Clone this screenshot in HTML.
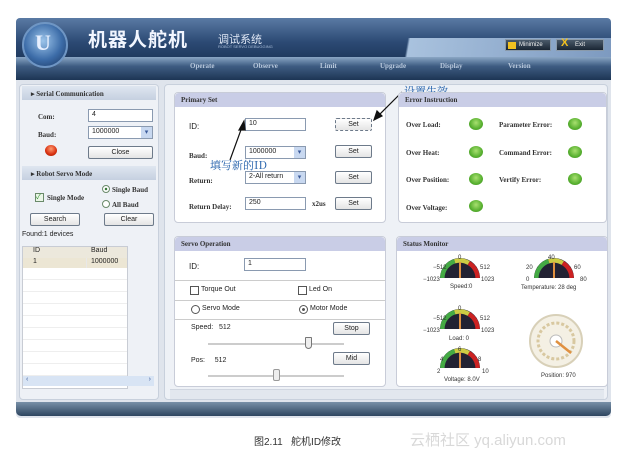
<!DOCTYPE html>
<html><head><meta charset="utf-8"><style>
*{margin:0;padding:0;box-sizing:border-box}
body{width:630px;height:457px;background:#fff;position:relative;overflow:hidden;font-family:"Liberation Sans","Noto Sans CJK SC",sans-serif;font-size:8px;color:#222}
.a{position:absolute}
.ser{font-family:"Liberation Serif","Noto Serif CJK SC",serif;font-weight:bold;font-size:7px;color:#333}
.box{position:absolute;background:#fff;border:1px solid #c8ccd8;border-radius:4px}
.hd{position:absolute;left:0;right:0;top:0;height:14px;background:#c9cde6;border-radius:4px 4px 0 0;padding:3px 6px}
.in{position:absolute;background:#fff;border:1px solid #8a9ab0;height:13px;font-size:7px;padding:1px 3px}
.btn{position:absolute;background:linear-gradient(#fff,#e4e4e4);border:1px solid #6d7a8a;border-radius:2px;height:13px;font-size:7px;text-align:center;line-height:11px}
.led{position:absolute;width:14px;height:12px;border-radius:50%;background:radial-gradient(circle at 50% 40%,#a8e070,#58b030 60%,#3b8a20)}
.dd{position:absolute;right:0;top:0;width:11px;height:11px;background:#c8d8f0;color:#3a5a9a;font-size:7px;text-align:center;line-height:11px}
</style></head><body>
<!-- window -->
<div class="a" style="left:16px;top:18px;width:595px;height:400px;background:#dfe4ec;border-radius:4px"></div>
<div class="a" style="left:16px;top:18px;width:595px;height:40px;background:linear-gradient(#5a7aa4,#2c4a74 60%,#1f3a5e);border-radius:4px 4px 0 0"></div>
<div class="a" style="left:390px;top:38px;width:221px;height:20px;background:linear-gradient(100deg,transparent 0,transparent 8%,#a9c2de 9%,#7d9ac0 100%)"></div>
<div class="a" style="left:16px;top:57px;width:595px;height:23px;background:linear-gradient(#8aa6c4,#3e5c82 40%,#1d3554)"></div>
<div class="a" style="left:22px;top:22px;width:46px;height:46px;border-radius:50%;background:radial-gradient(circle at 45% 40%,#9cc4ea,#3c6ca8 55%,#1a355e);border:2px solid #6f96c4"></div>
<div class="a" style="left:35px;top:30px;color:#e8f0ff;font-size:22px;font-weight:bold;font-family:'Liberation Serif',serif">U</div>
<div class="a" style="left:88px;top:25px;color:#f2f6ff;font-size:19px;font-weight:bold;letter-spacing:1px">机器人舵机</div>
<div class="a" style="left:218px;top:31px;color:#e0e8f6;font-size:11px">调试系统</div>
<div class="a" style="left:218px;top:44px;color:#a8bcd8;font-size:4px">ROBOT SERVO DEBUGGING</div>
<div class="a" style="left:505px;top:39px;width:46px;height:12px;background:linear-gradient(#4a5a6a,#1a2634);border:1px solid #8a9aaa;color:#eee;font-size:6px;padding-left:13px;line-height:10px"><span style="position:absolute;left:2px;top:2px;width:8px;height:7px;background:#f0c020"></span>Minimize</div>
<div class="a" style="left:556px;top:39px;width:48px;height:12px;background:linear-gradient(#4a5a6a,#1a2634);border:1px solid #8a9aaa;color:#eee;font-size:6px;padding-left:18px;line-height:10px"><span style="position:absolute;left:4px;top:-2px;color:#f0c020;font-size:11px;font-weight:bold">X</span>Exit</div>
<div class="a ser" style="top:62px;left:190px;color:#b8c8dc;font-size:7px;word-spacing:0">Operate</div>
<div class="a ser" style="top:62px;left:253px;color:#b8c8dc">Observe</div>
<div class="a ser" style="top:62px;left:320px;color:#b8c8dc">Limit</div>
<div class="a ser" style="top:62px;left:380px;color:#b8c8dc">Upgrade</div>
<div class="a ser" style="top:62px;left:440px;color:#b8c8dc">Display</div>
<div class="a ser" style="top:62px;left:508px;color:#b8c8dc">Version</div>
<!-- bottom bar -->
<div class="a" style="left:16px;top:402px;width:595px;height:14px;background:linear-gradient(#7890a8,#2e4660);border-radius:0 0 5px 5px"></div>
<!-- left panel -->
<div class="a" style="left:19px;top:84px;width:140px;height:316px;background:#eef1f6;border:1px solid #c8d0dc;border-radius:4px"></div>
<div class="a" style="left:22px;top:86px;width:134px;height:14px;background:linear-gradient(#dfe6f0,#c5d0e0)"></div>
<div class="a ser" style="left:31px;top:90px">▸ Serial Communication</div>
<div class="a ser" style="left:38px;top:113px">Com:</div>
<div class="in" style="left:88px;top:109px;width:65px">4</div>
<div class="a ser" style="left:38px;top:131px">Baud:</div>
<div class="in" style="left:88px;top:126px;width:65px">1000000<div class="dd">▾</div></div>
<div class="a" style="left:45px;top:145px;width:12px;height:11px;border-radius:50%;background:radial-gradient(circle at 50% 35%,#ff9a70,#d83010 60%,#902000)"></div>
<div class="btn" style="left:88px;top:146px;width:65px">Close</div>
<div class="a" style="left:22px;top:166px;width:134px;height:14px;background:linear-gradient(#dfe6f0,#c5d0e0)"></div>
<div class="a ser" style="left:31px;top:170px">▸ Robot Servo Mode</div>
<div class="a" style="left:35px;top:193px;width:9px;height:9px;border:1px solid #6a8a6a;background:#eaf6e6;font-size:7px;line-height:7px;color:#2a8a2a">✓</div>
<div class="a ser" style="left:47px;top:194px">Single Mode</div>
<div class="a" style="left:102px;top:185px;width:8px;height:8px;border-radius:50%;border:1px solid #6a8a6a;background:radial-gradient(#3a7a3a 25%,#fff 35%)"></div>
<div class="a ser" style="left:112px;top:186px">Single Baud</div>
<div class="a" style="left:102px;top:200px;width:8px;height:8px;border-radius:50%;border:1px solid #6a8a6a;background:#fff"></div>
<div class="a ser" style="left:112px;top:201px">All Baud</div>
<div class="btn" style="left:30px;top:213px;width:50px">Search</div>
<div class="btn" style="left:104px;top:213px;width:50px">Clear</div>
<div class="a" style="left:22px;top:231px;font-size:7px">Found:1 devices</div>
<div class="a" style="left:22px;top:246px;width:106px;height:143px;background:#fff;border:1px solid #c8ccd4;
background-image:linear-gradient(90px,transparent);"></div>
<div class="a" style="left:23px;top:247px;width:104px;height:11px;background:#ece8dc;font-size:7px"><span style="position:absolute;left:10px">ID</span><span style="position:absolute;left:68px">Baud</span></div>
<div class="a" style="left:23px;top:258px;width:104px;height:10px;background:#ece6d4;font-size:7px"><span style="position:absolute;left:10px">1</span><span style="position:absolute;left:68px">1000000</span></div>
<div class="a" style="left:86px;top:258px;width:1px;height:117px;background:#e8e8e8"></div>
<div class="a" style="left:23px;top:268px;width:104px;height:108px;background:repeating-linear-gradient(#fff 0,#fff 11px,#eee 11px,#eee 12px)"></div>
<div class="a" style="left:23px;top:376px;width:131px;height:10px;background:#d8e4f4;font-size:7px;color:#3a5a9a;padding-left:3px">‹<span style="position:absolute;right:3px">›</span></div>
<!-- main panel -->
<div class="a" style="left:164px;top:84px;width:444px;height:316px;background:#eef1f6;border:1px solid #c8d0dc;border-radius:4px"></div>
<div class="box" style="left:174px;top:92px;width:212px;height:131px"><div class="hd ser">Primary Set</div></div>
<div class="a" style="left:189px;top:122px;font-size:8px">ID:</div>
<div class="in" style="left:245px;top:118px;width:61px">10</div>
<div class="btn" style="left:335px;top:118px;width:37px;border-style:dashed">Set</div>
<div class="a ser" style="left:189px;top:152px">Baud:</div>
<div class="in" style="left:245px;top:146px;width:61px">1000000<div class="dd">▾</div></div>
<div class="btn" style="left:335px;top:145px;width:37px">Set</div>
<div class="a ser" style="left:189px;top:177px">Return:</div>
<div class="in" style="left:245px;top:171px;width:61px">2-All return<div class="dd">▾</div></div>
<div class="btn" style="left:335px;top:171px;width:37px">Set</div>
<div class="a ser" style="left:189px;top:203px">Return Delay:</div>
<div class="in" style="left:245px;top:197px;width:61px">250</div>
<div class="a ser" style="left:312px;top:200px">x2us</div>
<div class="btn" style="left:335px;top:197px;width:37px">Set</div>
<div class="a" style="left:210px;top:157px;color:#1a5aa8;font-size:11px;font-family:'Noto Serif CJK SC',serif">填写新的ID</div>
<div class="a" style="left:404px;top:83px;color:#1a5aa8;font-size:11px;font-family:'Noto Serif CJK SC',serif">设置生效</div>
<svg class="a" style="left:0;top:0" width="630" height="457"><g stroke="#111" stroke-width="1.2" fill="#111">
<line x1="230" y1="160" x2="242" y2="127"/><polygon points="244,121 239,130 245,130"/>
<line x1="402" y1="92" x2="378" y2="116"/><polygon points="374,120 377,111 382,116"/></g></svg>
<div class="box" style="left:398px;top:92px;width:209px;height:131px"><div class="hd ser">Error Instruction</div></div>
<div class="a ser" style="left:406px;top:121px">Over Load:</div><div class="led" style="left:469px;top:118px"></div>
<div class="a ser" style="left:499px;top:121px">Parameter Error:</div><div class="led" style="left:568px;top:118px"></div>
<div class="a ser" style="left:406px;top:149px">Over Heat:</div><div class="led" style="left:469px;top:146px"></div>
<div class="a ser" style="left:499px;top:149px">Command Error:</div><div class="led" style="left:568px;top:146px"></div>
<div class="a ser" style="left:406px;top:176px">Over Position:</div><div class="led" style="left:469px;top:173px"></div>
<div class="a ser" style="left:499px;top:176px">Vertify Error:</div><div class="led" style="left:568px;top:173px"></div>
<div class="a ser" style="left:406px;top:204px">Over Voltage:</div><div class="led" style="left:469px;top:200px"></div>
<!-- servo op -->
<div class="box" style="left:174px;top:236px;width:212px;height:151px"><div class="hd ser">Servo Operation</div></div>
<div class="a" style="left:189px;top:262px;font-size:8px">ID:</div>
<div class="in" style="left:244px;top:258px;width:62px">1</div>
<div class="a" style="left:175px;top:280px;width:210px;height:1px;background:#ccc"></div>
<div class="a" style="left:190px;top:286px;width:9px;height:9px;border:1px solid #555"></div><div class="a" style="left:201px;top:286px;font-size:7px">Torque Out</div>
<div class="a" style="left:298px;top:286px;width:9px;height:9px;border:1px solid #555"></div><div class="a" style="left:309px;top:286px;font-size:7px">Led On</div>
<div class="a" style="left:175px;top:300px;width:210px;height:1px;background:#ccc"></div>
<div class="a" style="left:191px;top:305px;width:9px;height:9px;border:1px solid #555;border-radius:50%"></div><div class="a" style="left:202px;top:305px;font-size:7px">Servo Mode</div>
<div class="a" style="left:299px;top:305px;width:9px;height:9px;border:1px solid #555;border-radius:50%;background:radial-gradient(#555 25%,#fff 35%)"></div><div class="a" style="left:310px;top:305px;font-size:7px">Motor Mode</div>
<div class="a" style="left:175px;top:319px;width:210px;height:1px;background:#ccc"></div>
<div class="a" style="left:191px;top:324px;font-size:7px">Speed:&nbsp;&nbsp;&nbsp;512</div>
<div class="btn" style="left:333px;top:322px;width:37px">Stop</div>
<div class="a" style="left:208px;top:343px;width:136px;height:2px;background:#ccc"></div>
<div class="a" style="left:305px;top:337px;width:7px;height:12px;border:1px solid #777;background:#eee;border-radius:1px 1px 4px 4px"></div>
<div class="a" style="left:191px;top:357px;font-size:7px">Pos:&nbsp;&nbsp;&nbsp;&nbsp;&nbsp;512</div>
<div class="btn" style="left:333px;top:352px;width:37px">Mid</div>
<div class="a" style="left:208px;top:375px;width:136px;height:2px;background:#ccc"></div>
<div class="a" style="left:273px;top:369px;width:7px;height:12px;border:1px solid #999;background:#eee;border-radius:2px"></div>
<!-- status -->
<div class="box" style="left:396px;top:236px;width:212px;height:151px"><div class="hd ser">Status Monitor</div></div>
<svg class="a" style="left:396px;top:236px" width="212" height="151" font-family="Liberation Sans" font-size="6" fill="#333">
<defs><g id="g"><path d="M-20,0 A20,20 0 0 1 20,0 Z" fill="#223"/><path d="M-20,0 A20,20 0 0 1 -6,-19" stroke="#4a4" stroke-width="5" fill="none" transform="scale(.88)"/><path d="M-6,-19 A20,20 0 0 1 10,-17" stroke="#cc4" stroke-width="5" fill="none" transform="scale(.88)"/><path d="M10,-17 A20,20 0 0 1 20,0" stroke="#c22" stroke-width="5" fill="none" transform="scale(.88)"/><line x1="0" y1="0" x2="0" y2="-16" stroke="#e09040" stroke-width="2"/></g></defs>
<use href="#g" x="64" y="42"/><text x="62" y="23">0</text><text x="37" y="33">−512</text><text x="84" y="33">512</text><text x="27" y="45">−1023</text><text x="85" y="45">1023</text><text x="54" y="52">Speed:0</text>
<use href="#g" x="158" y="42"/><text x="152" y="23">40</text><text x="130" y="33">20</text><text x="178" y="33">60</text><text x="130" y="45">0</text><text x="184" y="45">80</text><text x="125" y="53">Temperature: 28 deg</text>
<use href="#g" x="64" y="93"/><text x="62" y="74">0</text><text x="37" y="84">−512</text><text x="84" y="84">512</text><text x="27" y="96">−1023</text><text x="85" y="96">1023</text><text x="53" y="104">Load: 0</text>
<use href="#g" x="64" y="132"/><text x="62" y="115">6</text><text x="44" y="125">4</text><text x="82" y="125">8</text><text x="41" y="137">2</text><text x="86" y="137">10</text><text x="48" y="145">Voltage: 8.0V</text>
<circle cx="160" cy="105" r="26" fill="#f4f0e4" stroke="#d8d0b8" stroke-width="2"/><circle cx="160" cy="105" r="18" fill="none" stroke="#d8c8a0" stroke-width="3" stroke-dasharray="3 2"/><circle cx="160" cy="105" r="6" fill="#fff" stroke="#bbb"/><line x1="160" y1="105" x2="175" y2="117" stroke="#e09040" stroke-width="2.5"/>
<text x="145" y="141">Position:  970</text></svg>
<div class="a" style="left:170px;top:389px;width:434px;height:10px;background:#e2e7ee;border-top:1px solid #d0d6e0"></div>
<!-- caption -->
<div class="a" style="left:254px;top:433px;font-size:10px;color:#333">图2.11&nbsp;&nbsp;&nbsp;舵机ID修改</div>
<div class="a" style="left:410px;top:429px;font-size:15px;color:#d8d8d8">云栖社区 yq.aliyun.com</div>
</body></html>
